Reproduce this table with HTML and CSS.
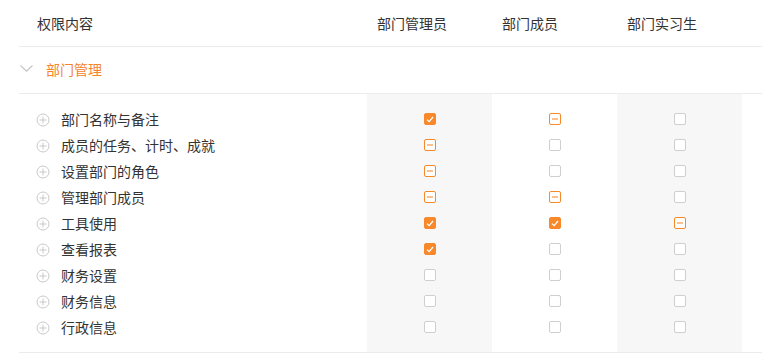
FILE: index.html
```html
<!DOCTYPE html>
<html lang="zh">
<head>
<meta charset="utf-8">
<link rel="stylesheet" href="styles.css">
</head>
<body>
<div class="perm">
  <div class="head">
    <div class="h-label">权限内容</div>
    <div class="h-col">部门管理员</div>
    <div class="h-col">部门成员</div>
    <div class="h-col">部门实习生</div>
  </div>
  <div class="group">
    <svg class="chev" width="13" height="7" viewBox="0 0 13 7"><path d="M0.5 0.5 L6.5 6.2 L12.5 0.5" fill="none" stroke="#c4c4c4" stroke-width="1.1"/></svg>
    <span class="group-name">部门管理</span>
  </div>
  <div class="body">
    <div class="labels">
      <div class="row"><svg class="plus" width="14" height="14" viewBox="0 0 14 14"><circle cx="7" cy="7" r="6" fill="none" stroke="#c9c9c9"/><path d="M7 3.5V10.5M3.5 7H10.5" stroke="#c9c9c9"/></svg>部门名称与备注</div>
      <div class="row"><svg class="plus" width="14" height="14" viewBox="0 0 14 14"><circle cx="7" cy="7" r="6" fill="none" stroke="#c9c9c9"/><path d="M7 3.5V10.5M3.5 7H10.5" stroke="#c9c9c9"/></svg>成员的任务、计时、成就</div>
      <div class="row"><svg class="plus" width="14" height="14" viewBox="0 0 14 14"><circle cx="7" cy="7" r="6" fill="none" stroke="#c9c9c9"/><path d="M7 3.5V10.5M3.5 7H10.5" stroke="#c9c9c9"/></svg>设置部门的角色</div>
      <div class="row"><svg class="plus" width="14" height="14" viewBox="0 0 14 14"><circle cx="7" cy="7" r="6" fill="none" stroke="#c9c9c9"/><path d="M7 3.5V10.5M3.5 7H10.5" stroke="#c9c9c9"/></svg>管理部门成员</div>
      <div class="row"><svg class="plus" width="14" height="14" viewBox="0 0 14 14"><circle cx="7" cy="7" r="6" fill="none" stroke="#c9c9c9"/><path d="M7 3.5V10.5M3.5 7H10.5" stroke="#c9c9c9"/></svg>工具使用</div>
      <div class="row"><svg class="plus" width="14" height="14" viewBox="0 0 14 14"><circle cx="7" cy="7" r="6" fill="none" stroke="#c9c9c9"/><path d="M7 3.5V10.5M3.5 7H10.5" stroke="#c9c9c9"/></svg>查看报表</div>
      <div class="row"><svg class="plus" width="14" height="14" viewBox="0 0 14 14"><circle cx="7" cy="7" r="6" fill="none" stroke="#c9c9c9"/><path d="M7 3.5V10.5M3.5 7H10.5" stroke="#c9c9c9"/></svg>财务设置</div>
      <div class="row"><svg class="plus" width="14" height="14" viewBox="0 0 14 14"><circle cx="7" cy="7" r="6" fill="none" stroke="#c9c9c9"/><path d="M7 3.5V10.5M3.5 7H10.5" stroke="#c9c9c9"/></svg>财务信息</div>
      <div class="row"><svg class="plus" width="14" height="14" viewBox="0 0 14 14"><circle cx="7" cy="7" r="6" fill="none" stroke="#c9c9c9"/><path d="M7 3.5V10.5M3.5 7H10.5" stroke="#c9c9c9"/></svg>行政信息</div>
    </div>
    <div class="col shaded">
      <div class="row"><span class="cb on"><svg width="8" height="7" viewBox="0 0 8 7"><path d="M1 3.6 L3.1 5.6 L7 1" fill="none" stroke="#fff" stroke-width="1.3"/></svg></span></div>
      <div class="row"><span class="cb half"></span></div>
      <div class="row"><span class="cb half"></span></div>
      <div class="row"><span class="cb half"></span></div>
      <div class="row"><span class="cb on"><svg width="8" height="7" viewBox="0 0 8 7"><path d="M1 3.6 L3.1 5.6 L7 1" fill="none" stroke="#fff" stroke-width="1.3"/></svg></span></div>
      <div class="row"><span class="cb on"><svg width="8" height="7" viewBox="0 0 8 7"><path d="M1 3.6 L3.1 5.6 L7 1" fill="none" stroke="#fff" stroke-width="1.3"/></svg></span></div>
      <div class="row"><span class="cb"></span></div>
      <div class="row"><span class="cb"></span></div>
      <div class="row"><span class="cb"></span></div>
    </div>
    <div class="col">
      <div class="row"><span class="cb half"></span></div>
      <div class="row"><span class="cb"></span></div>
      <div class="row"><span class="cb"></span></div>
      <div class="row"><span class="cb half"></span></div>
      <div class="row"><span class="cb on"><svg width="8" height="7" viewBox="0 0 8 7"><path d="M1 3.6 L3.1 5.6 L7 1" fill="none" stroke="#fff" stroke-width="1.3"/></svg></span></div>
      <div class="row"><span class="cb"></span></div>
      <div class="row"><span class="cb"></span></div>
      <div class="row"><span class="cb"></span></div>
      <div class="row"><span class="cb"></span></div>
    </div>
    <div class="col shaded">
      <div class="row"><span class="cb"></span></div>
      <div class="row"><span class="cb"></span></div>
      <div class="row"><span class="cb"></span></div>
      <div class="row"><span class="cb"></span></div>
      <div class="row"><span class="cb half"></span></div>
      <div class="row"><span class="cb"></span></div>
      <div class="row"><span class="cb"></span></div>
      <div class="row"><span class="cb"></span></div>
      <div class="row"><span class="cb"></span></div>
    </div>
  </div>
</div>
</body>
</html>
```

FILE: styles.css
```css
html, body {
  margin: 0;
  padding: 0;
  background: #fff;
}
body {
  font-family: "Noto Sans CJK SC", "Noto Sans", sans-serif;
  font-size: 14px;
  color: #333;
}
.perm {
  margin-left: 19px;
}
.head {
  display: grid;
  grid-template-columns: 348px 125px 125px 125px 1fr;
  height: 46px;
  align-items: center;
  border-bottom: 1px solid #ececec;
}
.h-label {
  padding-left: 18px;
  color: #333;
}
.h-col {
  padding-left: 10px;
  color: #333;
}
.group {
  box-sizing: border-box;
  display: flex;
  align-items: center;
  height: 47px;
  padding-bottom: 3px;
  border-bottom: 1px solid #ececec;
}
.chev {
  margin-left: 1px;
  margin-top: 0;
}
.group-name {
  margin-left: 13px;
  color: #f5842a;
}
.body {
  display: grid;
  grid-template-columns: 348px 125px 125px 125px 1fr;
  border-bottom: 1px solid #ececec;
}
.labels, .col {
  display: flex;
  flex-direction: column;
  padding: 12px 0;
}
.shaded {
  background: #f7f7f7;
}
.row {
  height: 26px;
  display: flex;
  align-items: center;
}
.labels .row {
  padding-left: 17px;
  gap: 11px;
}
.plus {
  margin-top: 1px;
}
.col .row {
  justify-content: center;
}
.cb {
  box-sizing: border-box;
  width: 12px;
  height: 12px;
  border: 1px solid #cfcfcf;
  border-radius: 2px;
  background: #fff;
  display: flex;
  align-items: center;
  justify-content: center;
}
.cb.on {
  background: #f7892b;
  border-color: #f7892b;
}
.cb.half {
  border-color: #f7892b;
}
.cb.half::after {
  content: "";
  width: 6px;
  height: 2px;
  background: #fbc08e;
}
```
